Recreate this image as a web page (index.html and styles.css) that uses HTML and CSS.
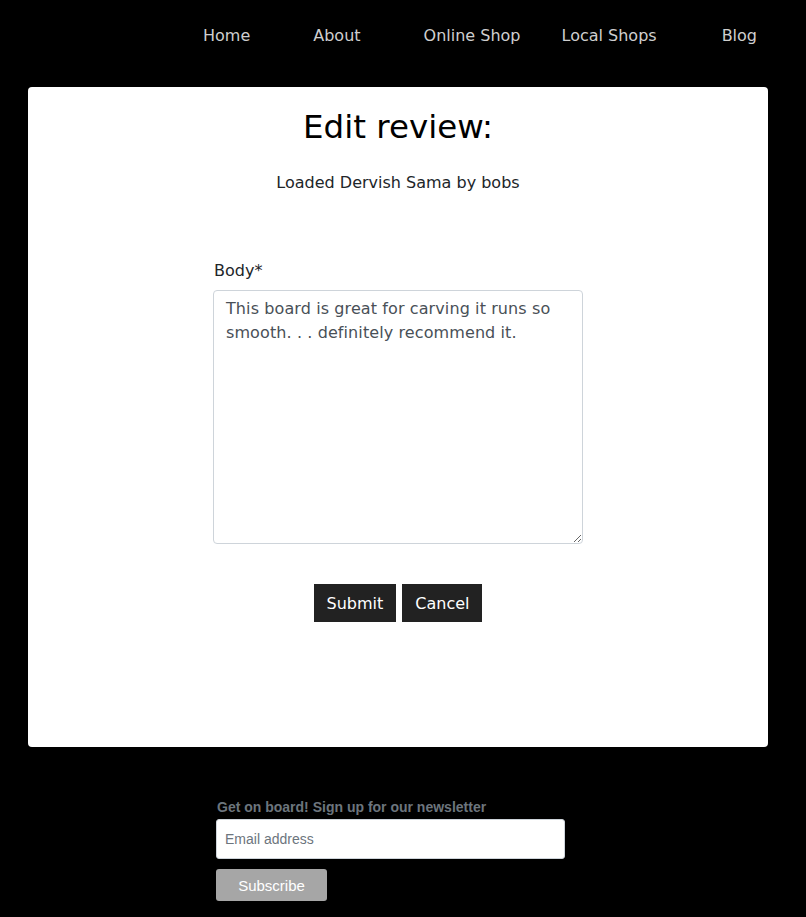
FILE: index.html
```html
<!DOCTYPE html>
<html>
<head>
<meta charset="utf-8">
<link rel="stylesheet" href="styles.css">
</head>
<body>
<nav class="nav">
  <a class="nav-link nav-home" href="#">Home</a>
  <a class="nav-link nav-about" href="#">About</a>
  <a class="nav-link nav-online" href="#">Online Shop</a>
  <a class="nav-link nav-local" href="#">Local Shops</a>
  <a class="nav-link nav-blog" href="#">Blog</a>
</nav>
<main class="card">
  <h1 class="title">Edit review:</h1>
  <p class="subtitle">Loaded Dervish Sama by bobs</p>
  <form class="form">
    <label class="label" for="body">Body*</label>
    <textarea id="body" class="textarea">This board is great for carving it runs so smooth. . . definitely recommend it.</textarea>
    <div class="actions">
      <button type="button" class="btn">Submit</button>
      <button type="button" class="btn">Cancel</button>
    </div>
  </form>
</main>
<footer class="footer">
  <div class="newsletter">
    <div class="news-title">Get on board! Sign up for our newsletter</div>
    <input class="email" type="text" placeholder="Email address">
    <button type="button" class="subscribe">Subscribe</button>
  </div>
</footer>
</body>
</html>
```
FILE: styles.css
```css
* { box-sizing: border-box; }
html, body { background: #000; }
body {
  margin: 0;
  font-family: "DejaVu Sans", Verdana, sans-serif;
  color: #212529;
  width: 806px;
  height: 917px;
  overflow: hidden;
}
.nav {
  display: flex;
  align-items: center;
  height: 70px;
  padding-left: 203px;
}
.nav-link {
  color: #cfcfcf;
  text-decoration: none;
  font-size: 16px;
  white-space: nowrap;
}
.nav-about { margin-left: 63px; }
.nav-online { margin-left: 63px; }
.nav-local { margin-left: 41px; }
.nav-blog { margin-left: 65px; }
.card {
  margin: 17px 0 0 28px;
  width: 740px;
  height: 660px;
  background: #fff;
  border-radius: 4px;
  display: flex;
  flex-direction: column;
  align-items: center;
  padding-top: 16px;
}
.title {
  margin: 0;
  font-weight: normal;
  font-size: 32.5px;
  line-height: 48px;
  color: #000;
}
.subtitle {
  margin: 20px 0 0;
  font-size: 16px;
  line-height: 24px;
}
.form {
  margin-top: 64px;
  width: 370px;
  display: flex;
  flex-direction: column;
}
.label {
  font-size: 16px;
  line-height: 24px;
  margin-left: 1px;
  margin-bottom: 7px;
}
.textarea {
  width: 370px;
  height: 254px;
  border: 1px solid #ced4da;
  border-radius: 4px;
  padding: 6px 12px;
  font-family: "DejaVu Sans", Verdana, sans-serif;
  font-size: 16px;
  line-height: 24px;
  color: #495057;
  letter-spacing: 0.1px;
  resize: vertical;
}
.actions {
  margin-top: 40px;
  display: flex;
  justify-content: center;
  gap: 6px;
}
.btn {
  background: #222;
  color: #fff;
  border: none;
  border-radius: 0;
  height: 38px;
  padding: 0 13px;
  font-family: "DejaVu Sans", Verdana, sans-serif;
  font-size: 16px;
}
.footer {
  padding: 52px 0 0 216px;
}
.newsletter {
  width: 349px;
  display: flex;
  flex-direction: column;
  align-items: flex-start;
}
.news-title {
  font-family: "Liberation Sans", Arial, sans-serif;
  font-weight: bold;
  font-size: 14px;
  color: #6c757d;
  margin-left: 1px;
  line-height: 16px;
}
.email {
  margin-top: 4px;
  width: 349px;
  height: 40px;
  border: 1px solid #ced4da;
  border-radius: 3px;
  padding: 0 8px;
  font-family: "Liberation Sans", Arial, sans-serif;
  font-size: 14px;
  color: #495057;
}
.email::placeholder { color: #6c757d; }
.subscribe {
  margin-top: 10px;
  width: 111px;
  height: 32px;
  background: #a6a6a6;
  color: #fff;
  border: none;
  border-radius: 3px;
  font-family: "Liberation Sans", Arial, sans-serif;
  font-size: 15px;
}
```
